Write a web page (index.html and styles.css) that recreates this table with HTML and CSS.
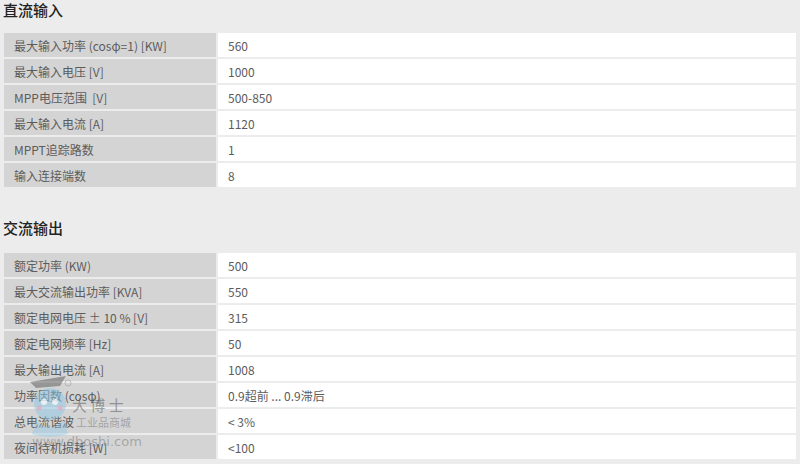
FILE: index.html
```html
<!DOCTYPE html>
<html lang="zh">
<head>
<meta charset="utf-8">
<link rel="stylesheet" href="styles.css">
</head>
<body>
<div class="page">
  <h2 class="title first">直流输入</h2>
  <table class="spec">
    <tr><td class="k">最大输入功率 (cosφ=1) [KW]</td><td class="v">560</td></tr>
    <tr><td class="k">最大输入电压 [V]</td><td class="v">1000</td></tr>
    <tr><td class="k">MPP电压范围 &nbsp;[V]</td><td class="v">500-850</td></tr>
    <tr><td class="k">最大输入电流 [A]</td><td class="v">1120</td></tr>
    <tr><td class="k">MPPT追踪路数</td><td class="v">1</td></tr>
    <tr><td class="k">输入连接端数</td><td class="v">8</td></tr>
  </table>
  <h2 class="title second">交流输出</h2>
  <table class="spec">
    <tr><td class="k">额定功率 (KW)</td><td class="v">500</td></tr>
    <tr><td class="k">最大交流输出功率 [KVA]</td><td class="v">550</td></tr>
    <tr><td class="k">额定电网电压 ± 10 % [V]</td><td class="v">315</td></tr>
    <tr><td class="k">额定电网频率 [Hz]</td><td class="v">50</td></tr>
    <tr><td class="k">最大输出电流 [A]</td><td class="v">1008</td></tr>
    <tr><td class="k">功率因数 (cosφ)</td><td class="v">0.9超前 ... 0.9滞后</td></tr>
    <tr><td class="k">总电流谐波</td><td class="v">&lt; 3%</td></tr>
    <tr><td class="k">夜间待机损耗 [W]</td><td class="v">&lt;100</td></tr>
  </table>
</div>
<div class="watermark">
  <svg class="mascot" width="50" height="66" viewBox="0 0 50 66">
    <polygon points="6,8 42,2 36,12 12,14" fill="#555" opacity="0.5"/>
    <circle cx="26" cy="30" r="16" fill="#8cc8e8" opacity="0.5"/>
    <circle cx="20" cy="28" r="3" fill="#fff" opacity="0.7"/>
    <circle cx="31" cy="28" r="3" fill="#fff" opacity="0.7"/>
    <circle cx="15" cy="34" r="2.5" fill="#f3a0b0" opacity="0.6"/>
    <circle cx="36" cy="34" r="2.5" fill="#f3a0b0" opacity="0.6"/>
    <path d="M12 46 Q26 60 40 46 L44 60 Q26 66 8 60 Z" fill="#8cc8e8" opacity="0.4"/>
    <circle cx="44" cy="9" r="3" fill="none" stroke="#999" stroke-width="0.8" opacity="0.7"/>
  </svg>
  <span class="wm-big">大 博 士</span>
  <span class="wm-small">工业品商城</span>
  <span class="wm-url">www.dboshi.com</span>
</div>
</body>
</html>
```
FILE: styles.css
```css
html, body {
  margin: 0;
  padding: 0;
  background: #ececec;
}
body {
  width: 800px;
  height: 464px;
  overflow: hidden;
  position: relative;
  font-family: "Noto Sans CJK SC", "Noto Sans", sans-serif;
}
.page {
  padding: 0 2px;
}
.title {
  margin: 0;
  padding-left: 1px;
  font-size: 15px;
  line-height: 20px;
  font-weight: 500;
  color: #222;
}
.title.first {
  height: 31px;
}
.title.second {
  margin-top: 26px;
  height: 36px;
  line-height: 26px;
}
.spec {
  width: 796px;
  border-collapse: separate;
  border-spacing: 2px;
  margin: 0;
}
.spec td {
  height: 24px;
  padding: 0 0 0 10px;
  font-size: 12px;
  color: #5c5c5c;
  vertical-align: middle;
  box-sizing: border-box;
}
.spec td.k {
  width: 212px;
  background: #d4d4d4;
}
.spec td.v {
  background: #ffffff;
}
.watermark {
  position: absolute;
  left: 20px;
  top: 372px;
  width: 200px;
  height: 92px;
  pointer-events: none;
}
.mascot {
  position: absolute;
  left: 4px;
  top: 2px;
}
.wm-big {
  position: absolute;
  left: 52px;
  top: 22px;
  font-size: 15px;
  color: rgba(80, 80, 80, 0.5);
}
.wm-small {
  position: absolute;
  left: 56px;
  top: 42px;
  font-size: 11px;
  color: rgba(120, 120, 120, 0.55);
}
.wm-url {
  position: absolute;
  left: 12px;
  top: 62px;
  font-size: 13px;
  color: rgba(120, 120, 120, 0.5);
  font-family: "DejaVu Sans", sans-serif;
}
```
